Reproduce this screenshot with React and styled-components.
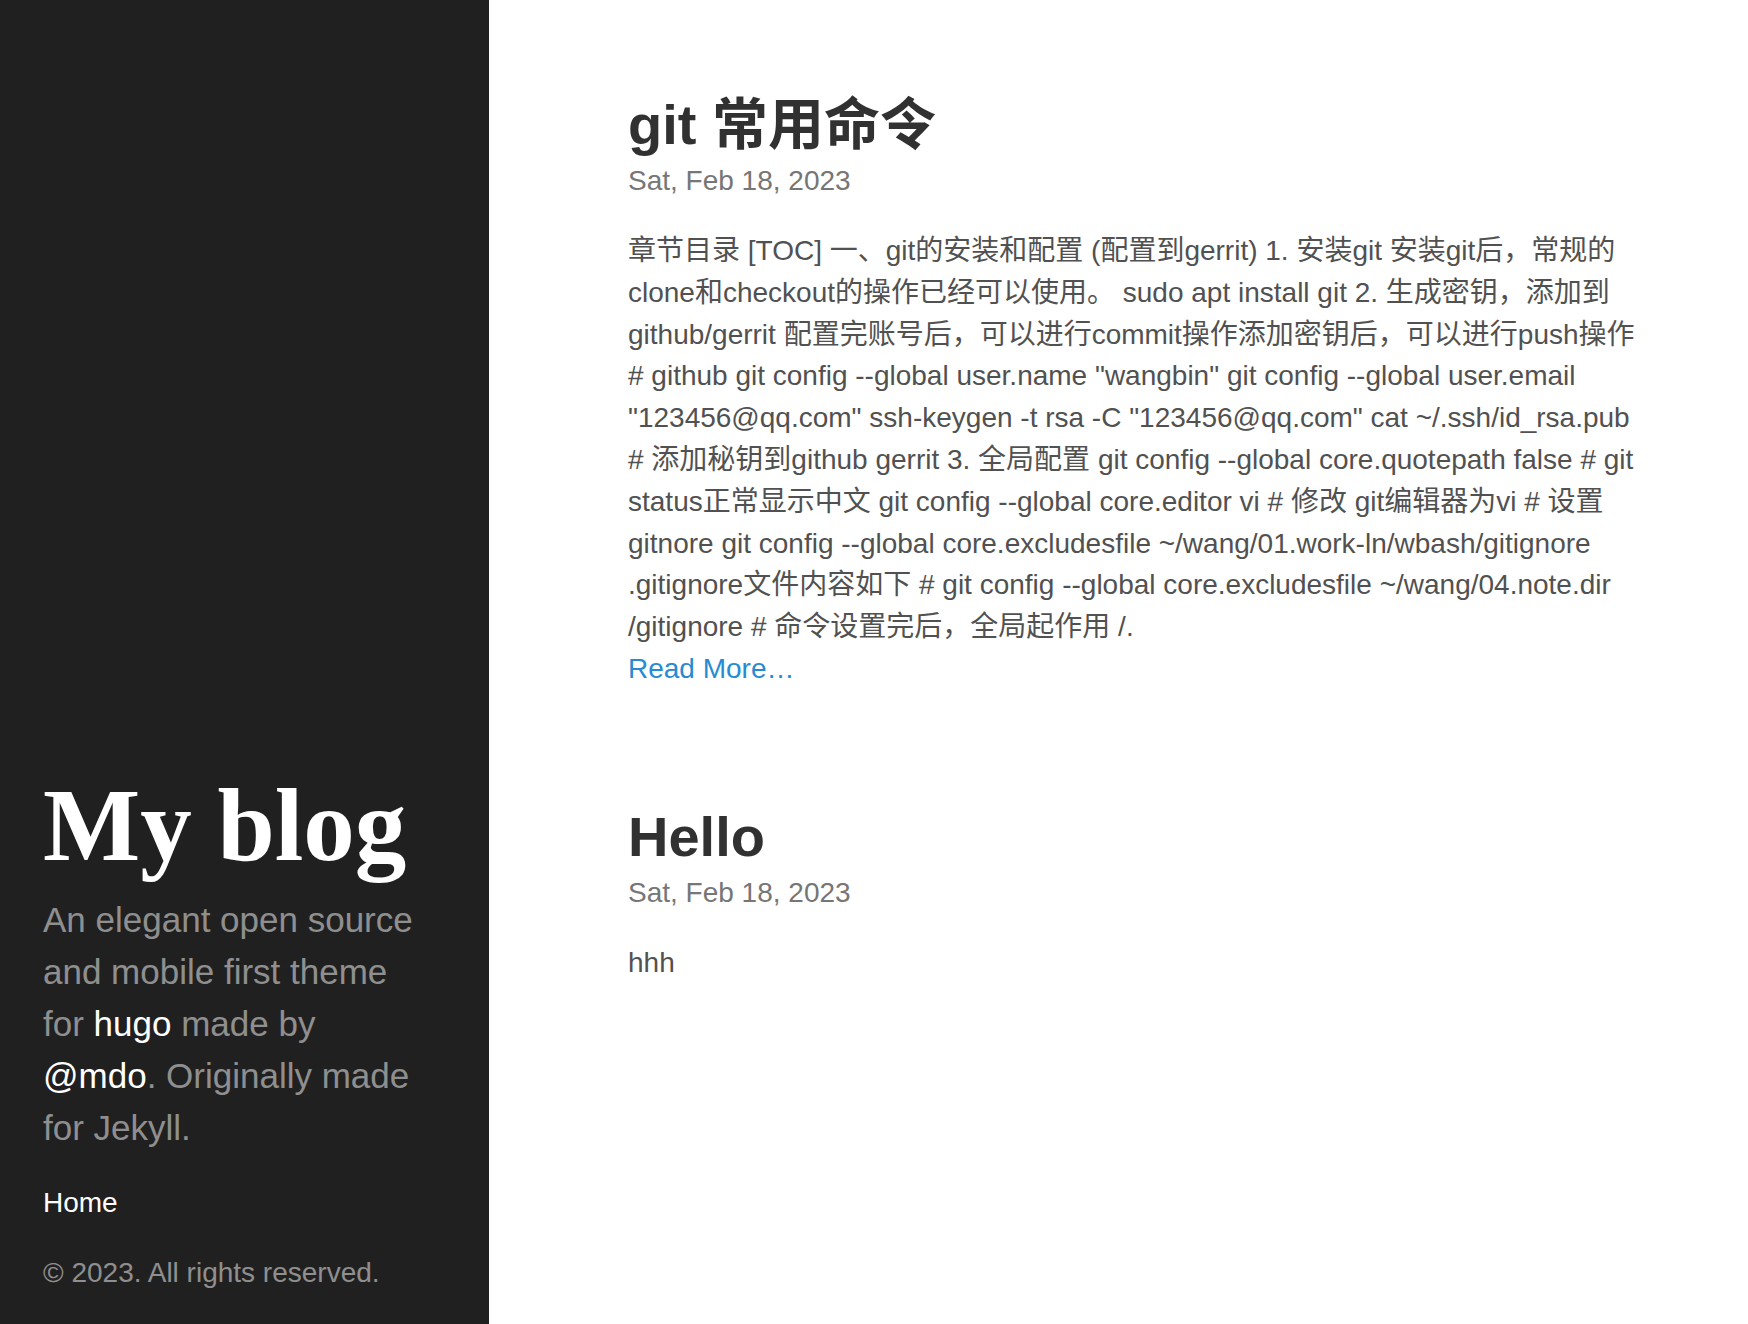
import React from "react";
import styled, { createGlobalStyle } from "styled-components";

const Global = createGlobalStyle`
  html, body { margin: 0; padding: 0; background: #fff; }
  body {
    font-family: "Liberation Sans", "Noto Sans CJK SC", Arial, sans-serif;
    font-size: 28px;
    line-height: 1.5;
    color: #515151;
  }
  * { box-sizing: border-box; }
`;

const Layout = styled.div`
  display: flex;
  min-height: 100vh;
`;

const Sidebar = styled.aside`
  flex: 0 0 489px;
  width: 489px;
  background: #202020;
  color: rgba(255, 255, 255, 0.5);
  display: flex;
  flex-direction: column;
  justify-content: flex-end;
  padding: 0 30px 30px 43px;
`;

const About = styled.div`
  width: 380px;
`;

const SiteTitle = styled.h1`
  margin: 0 0 4px;
  font-family: "Liberation Serif", "Times New Roman", serif;
  font-weight: 700;
  font-size: 103px;
  line-height: 1.25;
  color: #fff;
  white-space: nowrap;
`;

const Lead = styled.p`
  margin: 0 0 28px;
  font-size: 35px;
  line-height: 52px;
`;

const SideLink = styled.a`
  color: #fff;
  text-decoration: none;
`;

const Nav = styled.nav`
  display: flex;
  flex-direction: column;
  margin-bottom: 28px;
`;

const NavItem = styled.a`
  display: block;
  color: #fff;
  text-decoration: none;
  font-size: 28px;
  line-height: 42px;
`;

const Copyright = styled.p`
  margin: 0;
  font-size: 28px;
  line-height: 42px;
`;

const Content = styled.main`
  flex: 0 0 auto;
  width: 1147px;
  padding: 90px 0 112px 139px;
`;

const Post = styled.article`
  margin-bottom: 112px;
`;

const PostTitle = styled.h1`
  margin: 0;
  font-size: 56px;
  line-height: 1.25;
  font-weight: 700;
  color: #313131;
`;

const PostDate = styled.span`
  display: block;
  color: #767676;
  font-size: 28px;
  line-height: 42px;
  margin-bottom: 28px;
`;

const Summary = styled.div`
  font-size: 28px;
  line-height: 41.8px;
  color: #515151;
`;

const Line = styled.span`
  display: block;
  white-space: nowrap;
`;

const ReadMore = styled.a`
  display: block;
  color: #268bd2;
  text-decoration: none;
  line-height: 41.8px;
`;

const gitLines = [
  "章节目录 [TOC] 一、git的安装和配置 (配置到gerrit) 1. 安装git 安装git后，常规的",
  "clone和checkout的操作已经可以使用。 sudo apt install git 2. 生成密钥，添加到",
  "github/gerrit 配置完账号后，可以进行commit操作添加密钥后，可以进行push操作",
  '# github git config --global user.name "wangbin" git config --global user.email',
  '"123456@qq.com" ssh-keygen -t rsa -C "123456@qq.com" cat ~/.ssh/id_rsa.pub',
  "# 添加秘钥到github gerrit 3. 全局配置 git config --global core.quotepath false # git",
  "status正常显示中文 git config --global core.editor vi # 修改 git编辑器为vi # 设置",
  "gitnore git config --global core.excludesfile ~/wang/01.work-ln/wbash/gitignore",
  ".gitignore文件内容如下 # git config --global core.excludesfile ~/wang/04.note.dir",
  "/gitignore # 命令设置完后，全局起作用 /.",
];

export default function App() {
  return (
    <>
      <Global />
      <Layout>
        <Sidebar>
          <About>
            <SiteTitle>My blog</SiteTitle>
            <Lead>
              An elegant open source and mobile first theme for{" "}
              <SideLink href="#">hugo</SideLink> made by{" "}
              <SideLink href="#">@mdo</SideLink>. Originally made for Jekyll.
            </Lead>
          </About>
          <Nav>
            <NavItem href="#">Home</NavItem>
          </Nav>
          <Copyright>© 2023. All rights reserved.</Copyright>
        </Sidebar>
        <Content>
          <Post>
            <PostTitle>git 常用命令</PostTitle>
            <PostDate>Sat, Feb 18, 2023</PostDate>
            <Summary>
              {gitLines.map((l, i) => (
                <Line key={i}>{l}</Line>
              ))}
              <ReadMore href="#">Read More…</ReadMore>
            </Summary>
          </Post>
          <Post>
            <PostTitle>Hello</PostTitle>
            <PostDate>Sat, Feb 18, 2023</PostDate>
            <Summary>
              <Line>hhh</Line>
            </Summary>
          </Post>
        </Content>
      </Layout>
    </>
  );
}
